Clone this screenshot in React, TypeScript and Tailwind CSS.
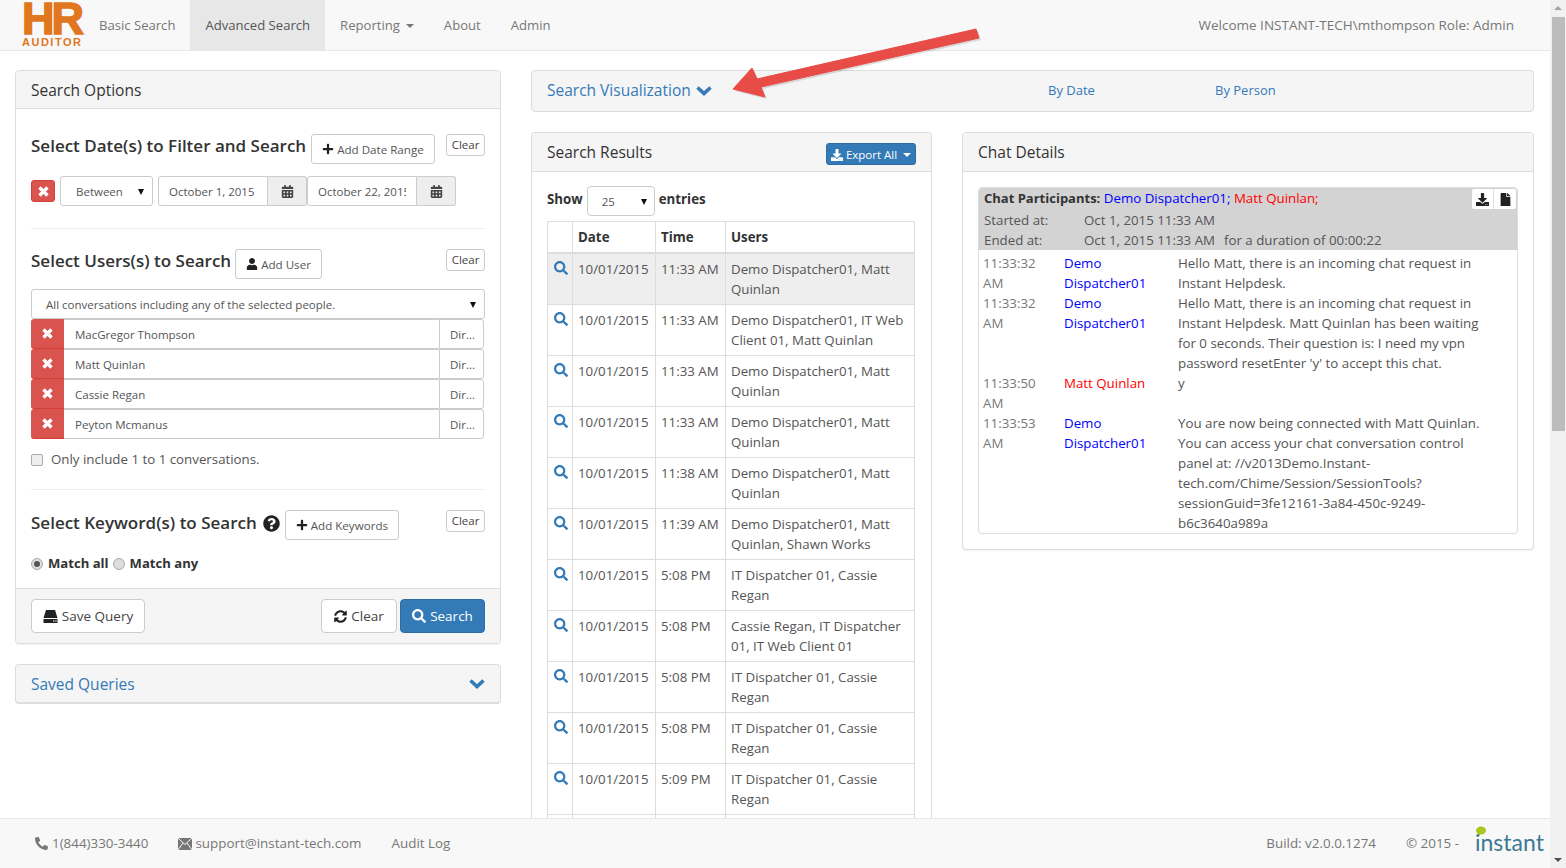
import { FaCalendarAlt, FaDownload, FaFile, FaPhoneAlt, FaPlus, FaQuestionCircle, FaSearch, FaSyncAlt, FaUser } from "react-icons/fa";

const results = [
  ["10/01/2015", "11:33 AM", "Demo Dispatcher01, Matt Quinlan"],
  ["10/01/2015", "11:33 AM", "Demo Dispatcher01, IT Web Client 01, Matt Quinlan"],
  ["10/01/2015", "11:33 AM", "Demo Dispatcher01, Matt Quinlan"],
  ["10/01/2015", "11:33 AM", "Demo Dispatcher01, Matt Quinlan"],
  ["10/01/2015", "11:38 AM", "Demo Dispatcher01, Matt Quinlan"],
  ["10/01/2015", "11:39 AM", "Demo Dispatcher01, Matt Quinlan, Shawn Works"],
  ["10/01/2015", "5:08 PM", "IT Dispatcher 01, Cassie Regan"],
  ["10/01/2015", "5:08 PM", "Cassie Regan, IT Dispatcher 01, IT Web Client 01"],
  ["10/01/2015", "5:08 PM", "IT Dispatcher 01, Cassie Regan"],
  ["10/01/2015", "5:08 PM", "IT Dispatcher 01, Cassie Regan"],
  ["10/01/2015", "5:09 PM", "IT Dispatcher 01, Cassie Regan"],
  ["10/01/2015", "5:09 PM", "IT Dispatcher 01, Cassie Regan"],
];

const messages = [
  { time: "11:33:32 AM", who: "Demo Dispatcher01", color: "text-[#0000ff]", text: "Hello Matt, there is an incoming chat request in Instant Helpdesk." },
  { time: "11:33:32 AM", who: "Demo Dispatcher01", color: "text-[#0000ff]", text: "Hello Matt, there is an incoming chat request in Instant Helpdesk. Matt Quinlan has been waiting for 0 seconds. Their question is: I need my vpn password resetEnter 'y' to accept this chat." },
  { time: "11:33:50 AM", who: "Matt Quinlan", color: "text-[#ff0000]", text: "y" },
  { time: "11:33:53 AM", who: "Demo Dispatcher01", color: "text-[#0000ff]", text: "You are now being connected with Matt Quinlan. You can access your chat conversation control panel at: //v2013Demo.Instant-tech.com/Chime/Session/SessionTools?sessionGuid=3fe12161-3a84-450c-9249-b6c3640a989a" },
];

const people = ["MacGregor Thompson", "Matt Quinlan", "Cassie Regan", "Peyton Mcmanus"];

function Caret() {
  return <span className="inline-block ml-[6px] align-middle border-x-[4px] border-t-[4px] border-x-transparent border-t-current" />;
}

function SelectArrow() {
  return <span className="border-x-[3.5px] border-t-[6px] border-x-transparent border-t-[#111]" />;
}

// thick chevron, the icon package one is too thin at this size
function Chevron() {
  return (
    <svg width="16" height="11" viewBox="0 0 16 11" fill="none" stroke="currentColor" strokeWidth="3.6">
      <path d="M1.500 2.500 L8 8.500 L14.500 2.500" />
    </svg>
  );
}

function RemoveIcon() {
  return (
    <svg width="11" height="11" viewBox="0 0 11 11" fill="none" stroke="#fff" strokeWidth="3.4">
      <path d="M1.500 1.500 L9.500 9.500 M9.500 1.500 L1.500 9.500" />
    </svg>
  );
}

function SmallButton({ icon, label }: { icon: React.ReactNode; label: string }) {
  return (
    <button className="h-[30px] px-[10px] flex items-center gap-[3px] bg-white border border-[#ccc] rounded-[3px] text-[11.6px] text-[#555]">
      {icon}
      <span className="pt-[1px]">{label}</span>
    </button>
  );
}

function ClearButton() {
  return <button className="ml-auto h-[22px] w-[39px] bg-white border border-[#ccc] rounded-[3px] text-[11.5px] text-[#444]">Clear</button>;
}

function DateInput({ value }: { value: string }) {
  return (
    <div className="flex h-[30px] text-[11.5px] text-[#555]">
      <div className="w-[110px] pl-[10px] pt-[1px] flex items-center whitespace-nowrap bg-white border border-[#ccc] rounded-l-[3px]">
        <span className="w-[88px] overflow-hidden">{value}</span>
      </div>
      <div className="w-[39px] flex items-center justify-center bg-[#eee] border border-l-0 border-[#ccc] rounded-r-[3px]">
        <FaCalendarAlt className="text-[13px] text-[#444]" />
      </div>
    </div>
  );
}

function SearchOptions() {
  return (
    <section className="border border-[#ddd] rounded-[4px] shadow-[0_1px_1px_rgba(0,0,0,0.05)] bg-white">
      <div className="h-[38px] px-[15px] pt-[2px] flex items-center bg-[#f5f5f5] border-b border-[#ddd] rounded-t-[4px] text-[15.5px] text-[#333]">Search Options</div>
      <div className="px-[15px] pt-[25px]">
        <div className="flex items-start">
          <h3 className="text-[17px] leading-[24px] font-semibold text-[#333] whitespace-nowrap">Select Date(s) to Filter and Search</h3>
          <div className="ml-[5px]">
            <SmallButton icon={<FaPlus className="text-[12px] text-[#222]" />} label="Add Date Range" />
          </div>
          <ClearButton />
        </div>
        <div className="mt-[12px] h-[30px] flex items-center">
          <button className="w-[24px] h-[22px] flex items-center justify-center bg-[#d9534f] border border-[#d43f3a] rounded-[3px]">
            <RemoveIcon />
          </button>
          <div className="ml-[5px] w-[93px] h-[30px] pl-[15px] pr-[8px] pt-[1px] flex items-center justify-between bg-white border border-[#ccc] rounded-[3px] text-[11.5px] text-[#555]">
            Between
            <SelectArrow />
          </div>
          <div className="ml-[5px]"><DateInput value="October 1, 2015" /></div>
          <DateInput value="October 22, 2015" />
        </div>
        <hr className="mt-[22px] border-[#eee]" />

        <div className="mt-[20px] flex items-start">
          <h3 className="text-[17px] leading-[24px] font-semibold text-[#333] whitespace-nowrap">Select Users(s) to Search</h3>
          <div className="ml-[4px]">
            <SmallButton icon={<FaUser className="text-[12px] text-[#222]" />} label="Add User" />
          </div>
          <ClearButton />
        </div>
        <div className="mt-[10px] h-[30px] pl-[14px] pr-[8px] pt-[2px] flex items-center justify-between bg-white border border-[#ccc] rounded-[3px] text-[11.5px] text-[#555]">
          All conversations including any of the selected people.
          <SelectArrow />
        </div>
        {people.map((p) => (
          <div key={p} className="h-[30px] w-[453px] flex text-[11.5px] text-[#555]">
            <div className="w-[33px] flex items-center justify-center bg-[#d9534f] rounded-l-[3px] border-b border-[#d43f3a]">
              <RemoveIcon />
            </div>
            <div className="flex-1 pl-[11px] pt-[2px] flex items-center bg-white border-y border-[#ccc]">{p}</div>
            <div className="w-[45px] pl-[10px] pt-[2px] flex items-center bg-white border border-[#ccc] rounded-r-[3px]">Dir...</div>
          </div>
        ))}
        <label className="mt-[11px] h-[20px] flex items-center gap-[8px] text-[13.3px] text-[#555]">
          <span className="w-[12px] h-[12px] bg-[#eee] border border-[#aaa] rounded-[2px]" />
          Only include 1 to 1 conversations.
        </label>
        <hr className="mt-[19px] border-[#eee]" />

        <div className="mt-[20px] flex items-start">
          <h3 className="pt-[1px] text-[17px] leading-[24px] font-semibold text-[#333] whitespace-nowrap flex items-center gap-[6px]">
            Select Keyword(s) to Search
            <FaQuestionCircle className="text-[17px] text-[#222]" />
          </h3>
          <div className="ml-[5px]">
            <SmallButton icon={<FaPlus className="text-[12px] text-[#222]" />} label="Add Keywords" />
          </div>
          <ClearButton />
        </div>
        <div className="mt-[14px] h-[20px] flex items-center text-[13.1px] font-bold text-[#333]">
          <span className="w-[12px] h-[12px] mr-[5px] flex items-center justify-center bg-[#ddd] border border-[#aaa] rounded-full">
            <span className="w-[6px] h-[6px] bg-[#555] rounded-full" />
          </span>
          Match all
          <span className="w-[12px] h-[12px] ml-[4px] mr-[5px] bg-[#ddd] border border-[#aaa] rounded-full" />
          Match any
        </div>
      </div>
      <div className="mt-[14px] h-[55px] px-[15px] flex items-center bg-[#f5f5f5] border-t border-[#ddd] rounded-b-[4px] text-[13.5px]">
        <button className="h-[34px] w-[114px] flex items-center justify-center gap-[4px] bg-white border border-[#ccc] rounded-[4px] text-[#444]">
          <svg width="15" height="13" viewBox="0 0 15 13" fill="#222">
            <path d="M3 0h9l2.500 8h-14z" />
            <path d="M0.500 9h14v4h-14z" />
            <rect x="10" y="10.500" width="1.500" height="1" fill="#fff" />
            <rect x="12.200" y="10.500" width="1.500" height="1" fill="#fff" />
          </svg>
          Save Query
        </button>
        <button className="ml-auto h-[34px] w-[76px] flex items-center justify-center gap-[4px] bg-white border border-[#ccc] rounded-[4px] text-[#444]">
          <FaSyncAlt className="text-[13px] text-[#222]" />
          Clear
        </button>
        <button className="ml-[3px] h-[34px] w-[85px] flex items-center justify-center gap-[4px] bg-[#337ab7] border border-[#2e6da4] rounded-[4px] text-white">
          <FaSearch className="text-[14px]" />
          Search
        </button>
      </div>
    </section>
  );
}

function ResultsTable() {
  return (
    <table className="w-[368px] table-fixed border-collapse text-[13.3px] text-[#555]">
      <thead>
        <tr className="h-[31px] text-[#333] font-bold border-b-2 border-[#ddd]">
          <th className="w-[25px] border border-[#ddd]" />
          <th className="w-[83px] pl-[5px] pt-[2px] text-left border border-[#ddd]">Date</th>
          <th className="w-[70px] pl-[5px] pt-[2px] text-left border border-[#ddd]">Time</th>
          <th className="pl-[5px] pt-[2px] text-left border border-[#ddd]">Users</th>
        </tr>
      </thead>
      <tbody>
        {results.map((r, i) => (
          <tr key={i} className={i === 0 ? "bg-[#eee]" : ""}>
            <td className="align-top pt-[7px] pl-[6px] border border-[#ddd]">
              <FaSearch className="text-[14px] text-[#337ab7]" />
            </td>
            <td className="align-top p-[5px] leading-[20px] border border-[#ddd] whitespace-nowrap">{r[0]}</td>
            <td className="align-top p-[5px] leading-[20px] border border-[#ddd] whitespace-nowrap">{r[1]}</td>
            <td className="align-top p-[5px] leading-[20px] border border-[#ddd]">{r[2]}</td>
          </tr>
        ))}
      </tbody>
    </table>
  );
}

function SearchResults() {
  return (
    <section className="w-[401px] border border-b-0 border-[#ddd] rounded-t-[4px] bg-white">
      <div className="h-[39px] px-[15px] flex items-center justify-between bg-[#f5f5f5] border-b border-[#ddd] rounded-t-[4px]">
        <span className="pt-[2px] text-[15.5px] text-[#333]">Search Results</span>
        <button className="mt-[4px] h-[22px] w-[90px] pt-[1px] flex items-center justify-center bg-[#337ab7] border border-[#2e6da4] rounded-[3px] text-[11.5px] text-white">
          <FaDownload className="text-[12px] mr-[3px]" />
          Export All
          <Caret />
        </button>
      </div>
      <div className="px-[15px] pt-[14px]">
        <div className="h-[30px] flex items-center text-[13.3px] font-bold text-[#333]">
          <span className="mb-[2px]">Show</span>
          <div className="mx-[4px] w-[68px] h-[30px] pl-[14px] pr-[7px] pt-[2px] flex items-center justify-between bg-white border border-[#ccc] rounded-[4px] text-[11.5px] font-normal text-[#555]">
            25
            <SelectArrow />
          </div>
          <span className="mb-[2px]">entries</span>
        </div>
        <div className="mt-[5px]">
          <ResultsTable />
        </div>
      </div>
    </section>
  );
}

function ChatDetails() {
  return (
    <section className="flex-1 self-start border border-[#ddd] rounded-[4px] bg-white shadow-[0_1px_1px_rgba(0,0,0,0.05)]">
      <div className="h-[39px] px-[15px] pt-[2px] flex items-center bg-[#f5f5f5] border-b border-[#ddd] rounded-t-[4px] text-[15.5px] text-[#333]">Chat Details</div>
      <div className="px-[15px] py-[15px]">
        <div className="border border-[#ddd] rounded-[4px] h-[347px] overflow-hidden text-[13.3px] leading-[20px] text-[#555]">
          <div className="relative h-[62px] px-[5px] bg-[#d3d3d3] rounded-t-[3px]">
            <div className="h-[20px]">
              <b className="text-[13px] text-[#333]">Chat Participants:</b>{" "}
              <span className="text-[#0000ff]">Demo Dispatcher01;</span>{" "}
              <span className="text-[#ff0000]">Matt Quinlan;</span>
            </div>
            <div className="flex mt-[2px]">
              <span className="w-[100px]">Started at:</span>
              <span>Oct 1, 2015 11:33 AM</span>
            </div>
            <div className="flex">
              <span className="w-[100px]">Ended at:</span>
              <span>Oct 1, 2015 11:33 AM</span>
              <span className="ml-[9px]">for a duration of 00:00:22</span>
            </div>
            <div className="absolute right-[1px] top-[1px] flex h-[20px] bg-white rounded-[2px] text-[#222] text-[13px]">
              <span className="w-[22px] flex items-center justify-center border-r border-[#ddd]"><FaDownload /></span>
              <span className="w-[22px] flex items-center justify-center"><FaFile /></span>
            </div>
          </div>
          <div className="pl-[4px] pt-[3px]">
            {messages.map((m, i) => (
              <div key={i} className="flex">
                <div className="w-[81px] pr-[20px] text-[#777]">{m.time}</div>
                <div className={"w-[114px] pr-[20px] " + m.color}>{m.who}</div>
                <div className="w-[310px] break-words">{m.text}</div>
              </div>
            ))}
          </div>
        </div>
      </div>
    </section>
  );
}

export default function App() {
  return (
    <div className="relative h-[868px] w-[1566px] flex overflow-hidden bg-white font-['Open_Sans',sans-serif]">
      <div className="w-[1550px] flex flex-col">
        <nav className="h-[51px] shrink-0 flex bg-[#f8f8f8] border-b border-[#e7e7e7] text-[13.1px] text-[#777]">
          <div className="w-[84px] pl-[22px] shrink-0 text-[#e0761d] font-['Liberation_Sans',sans-serif] font-bold">
            <div className="h-[37px] w-[60px] text-[45px] leading-[37px] tracking-[-3px] [-webkit-text-stroke:1.5px_#e0761d]">HR</div>
            <div className="text-[11px] leading-[11px] tracking-[1.5px]">AUDITOR</div>
          </div>
          <a className="px-[15px] pt-[1px] flex items-center">Basic Search</a>
          <a className="px-[15px] pt-[1px] flex items-center bg-[#e7e7e7] text-[#555]">Advanced Search</a>
          <a className="px-[15px] pt-[1px] flex items-center">Reporting<Caret /></a>
          <a className="px-[15px] pt-[1px] flex items-center">About</a>
          <a className="px-[15px] pt-[1px] flex items-center">Admin</a>
          <div className="ml-auto pr-[36px] pt-[1px] flex items-center text-[13.5px]">Welcome INSTANT-TECH\mthompson Role: Admin</div>
        </nav>

        <main className="flex-1 flex gap-[30px] pl-[15px] pr-[16px] pt-[19px] overflow-hidden">
          <div className="w-[486px] shrink-0">
            <SearchOptions />
            <section className="mt-[20px] h-[40px] px-[15px] flex items-center justify-between bg-[#f5f5f5] border border-[#ddd] border-b-2 rounded-[4px] text-[15.5px] text-[#337ab7]">
              <span className="pt-[2px]">Saved Queries</span>
              <Chevron />
            </section>
          </div>
          <div className="flex-1 min-w-0">
            <section className="h-[42px] flex items-center px-[15px] bg-[#f5f5f5] border border-[#ddd] rounded-[4px] text-[#337ab7]">
              <span className="w-[501px] flex items-center gap-[5px] text-[15.5px]">
                Search Visualization
                <span className="mb-[2px]"><Chevron /></span>
              </span>
              <span className="w-[167px] text-[13px]">By Date</span>
              <span className="text-[13px]">By Person</span>
            </section>
            <div className="mt-[20px] flex gap-[30px] items-start">
              <SearchResults />
              <ChatDetails />
            </div>
          </div>
        </main>

        <footer className="h-[50px] shrink-0 pl-[35px] pr-[7px] flex items-center bg-[#f8f8f8] border-t border-[#e7e7e7] text-[13.4px] text-[#777]">
          <FaPhoneAlt className="text-[13px] mr-[4px]" />
          <span>1(844)330-3440</span>
          <svg className="ml-[30px] mr-[3px]" width="14" height="12" viewBox="0 0 14 12">
            <rect width="14" height="12" fill="#777" />
            <path d="M0 0 L7 6.500 L14 0 M0 12 L5 5 M14 12 L9 5" fill="none" stroke="#f8f8f8" strokeWidth="1" />
          </svg>
          <span>support@instant-tech.com</span>
          <span className="ml-[30px]">Audit Log</span>
          <span className="ml-auto">Build: v2.0.0.1274</span>
          <span className="ml-[30px]">© 2015 -</span>
          <div className="relative ml-[16px] w-[68px] h-[30px]">
            <svg className="absolute left-0 top-[-3px]" width="12" height="11" viewBox="0 0 12 11">
              <ellipse cx="6" cy="4.500" rx="5" ry="4" fill="#a8c81e" />
              <path d="M3 7l0 3 3-2z" fill="#a8c81e" />
            </svg>
            <span className="absolute left-0 bottom-[2px] text-[23px] leading-[30px] text-[#3d7896] font-['Lato',sans-serif]">instant</span>
          </div>
        </footer>
      </div>

      <div className="w-[16px] shrink-0 bg-[#f1f1f1] flex flex-col items-center">
        <span className="mt-[6px] border-x-[4px] border-b-[4px] border-x-transparent border-b-[#a3a3a3]" />
        <div className="mt-[7px] h-[414px] w-[13px] bg-[#bcbcbc]" />
        <span className="mt-auto mb-[6px] border-x-[4px] border-t-[4px] border-x-transparent border-t-[#505050]" />
      </div>

      <svg className="absolute left-0 top-0 pointer-events-none" width="1566" height="868" viewBox="0 0 1566 868">
        <path d="M976 29 L757 79 L752 68 L733 89 L765 97 L761 87 L979 38 Z" fill="#000" opacity="0.12" transform="translate(2 2)" />
        <path d="M976 29 L757 79 L752 68 L733 89 L765 97 L761 87 L979 38 Z" fill="#e84c47" stroke="#e84c47" strokeWidth="1" strokeLinejoin="round" />
      </svg>
    </div>
  );
}
